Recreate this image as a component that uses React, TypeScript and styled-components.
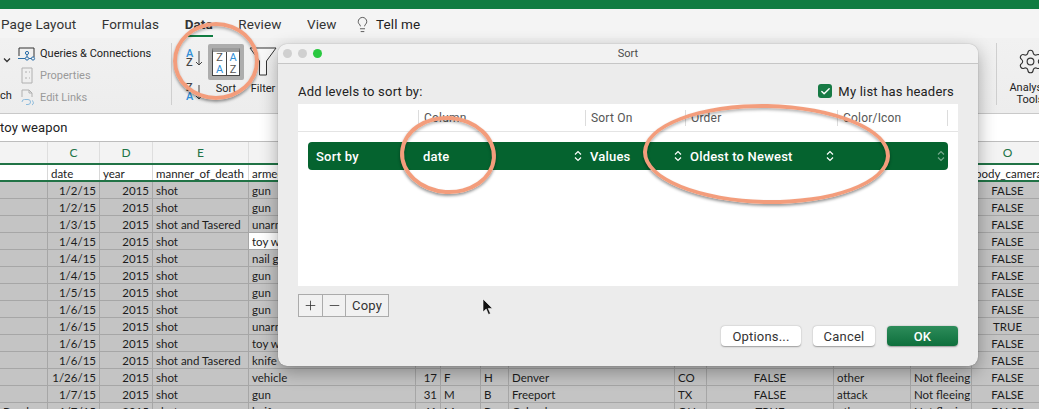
import styled, { createGlobalStyle } from "styled-components";
import { Lightbulb, Settings, Check, Plus, Minus } from "lucide-react";

const GlobalStyle = createGlobalStyle`
    html, body {
        margin: 0;
        padding: 0;
        background: #fff;
    }
    * {
        box-sizing: border-box;
    }
`;

const UI_FONT = `Roboto, "Liberation Sans", sans-serif`;
const SHEET_FONT = `Lato, "Liberation Sans", sans-serif`;
const GRID_LINE = "#a6a6a6";
const COLUMNS = "48px 52px 53px 96px 167px 25px 40px 28px 166px 32px 127px 77px 61px 72px";

const Page = styled.div`
    position: relative;
    width: 1039px;
    height: 409px;
    overflow: hidden;
    font-family: ${UI_FONT};
    color: #222;
`;

// Excel chrome
const TitleBar = styled.div`
    height: 9px;
    background: #107c41;
`;

const TabBar = styled.div`
    height: 29px;
    display: flex;
    align-items: center;
    gap: 25.5px;
    padding: 1px 0 0 1px;
    background: #f4f4f4;
    font-size: 13.5px;
    letter-spacing: 0.1px;
    color: #333;
`;

const Tab = styled.span<{ $active?: boolean }>`
    position: relative;
    font-weight: ${(p) => (p.$active ? 700 : 400)};

    &::after {
        content: "";
        display: ${(p) => (p.$active ? "block" : "none")};
        position: absolute;
        left: 0;
        right: 0;
        bottom: -5px;
        height: 2px;
        background: #107c41;
    }
`;

const TellMe = styled.span`
    display: flex;
    align-items: center;
    gap: 5px;
    margin-left: -8px;
    color: #222;
`;

const Ribbon = styled.div`
    height: 76px;
    display: flex;
    background: linear-gradient(#f1f1f1, #ededed);
    border-bottom: 1px solid #c9c9c9;
    padding-top: 5px;
`;

const RefreshStub = styled.div`
    width: 18px;
    flex: none;
    overflow: hidden;
    font-size: 11px;
    display: flex;
    flex-direction: column;
    align-items: flex-end;
    justify-content: space-between;
    padding: 14px 0 11px;
    direction: rtl;
`;

const StubChevron = styled.svg`
    width: 8px;
    height: 6px;
    margin-right: 7px;
    margin-left: auto;
`;

const ConnectionGroup = styled.div`
    width: 154px;
    flex: none;
    display: flex;
    flex-direction: column;
    gap: 5px;
    padding-top: 2px;
    border-right: 1px solid #cfcfcf;
    height: 62px;
`;

const ConnectionRow = styled.div<{ $disabled?: boolean }>`
    flex: none;
    display: flex;
    align-items: center;
    gap: 4px;
    height: 17px;
    font-size: 11px;
    color: ${(p) => (p.$disabled ? "#9a9a9a" : "#222")};
    & > svg {
        width: 18px;
        flex: none;
    }
`;

const SortStack = styled.div`
    width: 22px;
    flex: none;
    margin-left: 14px;
    display: flex;
    flex-direction: column;
    justify-content: space-between;
    padding-top: 6px;
    height: 58px;
`;

const AzIcon = styled.div`
    display: grid;
    grid-template-columns: 9px 8px;
    width: 18px;
    line-height: 9px;
    font-size: 11px;
    font-weight: 500;
`;

const AzLetter = styled.span<{ $blue?: boolean }>`
    color: ${(p) => (p.$blue ? "#2f8fd8" : "#444")};
    grid-column: 1;
    height: 9px;
`;

const AzArrow = styled.svg`
    grid-column: 2;
    grid-row: 1 / span 2;
    width: 8px;
    height: 18px;
`;

const RibbonTool = styled.div<{ $gap?: number }>`
    flex: none;
    display: flex;
    flex-direction: column;
    align-items: center;
    margin-left: ${(p) => p.$gap ?? 0}px;
    font-size: 11px;
    color: #222;
    height: 62px;
`;

const SortButton = styled.div`
    width: 36px;
    height: 36px;
    margin-top: 1px;
    margin-bottom: 2px;
    background: #adadad;
    border-radius: 2px;
    padding: 4px;
`;

const SortGlyph = styled.div`
    height: 28px;
    background: #fff;
    border: 1px solid #444;
    border-top: 4px solid #9b9b9b;
    display: grid;
    grid-template-columns: 1fr 1fr;
`;

const SortPane = styled.div`
    display: flex;
    flex-direction: column;
    align-items: center;
    font-size: 11px;
    line-height: 11.5px;
    & + & {
        border-left: 1px solid #444;
    }
`;

const PaneLetter = styled.span<{ $blue?: boolean }>`
    color: ${(p) => (p.$blue ? "#2f8fd8" : "#555")};
`;

const FunnelIcon = styled.svg`
    width: 28px;
    height: 30px;
    margin-bottom: 5px;
    margin-top: 4px;
`;

const RibbonSpacer = styled.div`
    flex: 1;
`;

const AnalysisTool = styled.div`
    width: 43px;
    flex: none;
    height: 62px;
    border-left: 1px solid #cfcfcf;
    padding: 5px 0 0 12px;
    overflow: hidden;
    white-space: nowrap;
    font-size: 11px;
    line-height: 12px;
    text-align: center;
`;

const AnalysisInner = styled.div`
    width: 42px;
    display: flex;
    flex-direction: column;
    align-items: center;
    & > svg {
        margin-bottom: 7px;
    }
`;

const FormulaBar = styled.div`
    height: 28px;
    padding: 0 0 1px 0;
    display: flex;
    align-items: center;
    background: #fff;
    border-bottom: 1px solid #bdbdbd;
    font-size: 13px;
    letter-spacing: 0.1px;
`;

// Sheet
const SheetRow = styled.div<{ $kind?: "letters" | "head" }>`
    display: grid;
    grid-template-columns: ${COLUMNS};
    font-family: ${SHEET_FONT};
    font-size: 11.5px;
    height: ${(p) => (p.$kind === "letters" ? "21px" : p.$kind === "head" ? "19px" : "17px")};
    background: ${(p) => (p.$kind === "letters" ? "#f3f3f3" : p.$kind === "head" ? "#fff" : "#c4c4c4")};
    border-bottom: ${(p) => (p.$kind === "letters" ? "none" : p.$kind === "head" ? "2px solid #217346" : `1px solid ${GRID_LINE}`)};
    border-top: ${(p) => (p.$kind === "head" ? "2px solid #217346" : "none")};
    color: #1c1c1c;
    white-space: nowrap;
`;

const Letter = styled.div`
    display: flex;
    align-items: center;
    justify-content: center;
    color: #217346;
    font-size: 12px;
    border-right: 1px solid #dedede;
`;

const Cell = styled.div<{ $align?: string; $active?: boolean; $plain?: boolean }>`
    padding: 1px 3px 0;
    line-height: 15px;
    text-align: ${(p) => p.$align ?? "left"};
    border-right: 1px solid ${(p) => (p.$plain ? "#d8d8d8" : GRID_LINE)};
    background: ${(p) => (p.$active ? "#fff" : "transparent")};
    overflow: hidden;
`;

// Sort dialog
const Dialog = styled.div`
    position: absolute;
    left: 278px;
    top: 44px;
    width: 700px;
    height: 322px;
    background: #ececec;
    border-radius: 9px;
    box-shadow: 0 0 1px rgba(0, 0, 0, 0.45), 0 6px 18px rgba(0, 0, 0, 0.32);
    display: flex;
    flex-direction: column;
    overflow: hidden;
`;

const DialogTitle = styled.div`
    position: relative;
    flex: none;
    height: 20px;
    background: #f2f2f2;
    border-bottom: 1px solid #c6c6c6;
    display: flex;
    align-items: center;
    justify-content: center;
    font-size: 11px;
    color: #4a4a4a;
`;

const Lights = styled.div`
    position: absolute;
    left: 5px;
    top: 5px;
    display: flex;
    gap: 6px;
`;

const Light = styled.i<{ $color: string }>`
    width: 9px;
    height: 9px;
    border-radius: 50%;
    background: ${(p) => p.$color};
`;

const DialogBody = styled.div`
    flex: 1;
    display: flex;
    flex-direction: column;
    padding: 0 20px 20px 20px;
`;

const DialogHead = styled.div`
    height: 40px;
    padding-top: 14px;
    display: flex;
    align-items: center;
    justify-content: space-between;
    font-size: 13px;
    letter-spacing: 0.2px;
`;

const HeaderToggle = styled.div`
    display: flex;
    align-items: center;
    gap: 6px;
    margin-right: 4px;
`;

const CheckBox = styled.span`
    width: 14px;
    height: 14px;
    border-radius: 3px;
    background: #177a45;
    color: #fff;
    display: flex;
    align-items: center;
    justify-content: center;
`;

const LevelsTable = styled.div`
    height: 182px;
    background: #fff;
    display: flex;
    flex-direction: column;
`;

const LevelsHeader = styled.div`
    height: 28px;
    flex: none;
    display: grid;
    grid-template-columns: 120px 167px 100px 152px 110px 11px;
    padding-top: 6px;
    border-bottom: 1px solid #e4e4e4;
    font-size: 12px;
    color: #555;
    letter-spacing: 0.2px;
`;

const LevelsHeading = styled.div`
    height: 16px;
    line-height: 17px;
    padding-left: 5px;
    border-left: 1px solid #dcdcdc;
    &:first-child {
        border-left: none;
    }
`;

const LevelRow = styled.div`
    margin: 10px 10px 0;
    height: 28px;
    background: #05632f;
    border-radius: 4px;
    color: #fff;
    display: grid;
    grid-template-columns: 110px 167px 100px 152px 1fr;
    align-items: center;
    font-size: 13px;
    font-weight: 500;
    letter-spacing: 0.2px;
`;

const LevelCell = styled.div<{ $first?: boolean }>`
    display: flex;
    align-items: center;
    justify-content: space-between;
    padding: 0 3px 0 ${(p) => (p.$first ? "8px" : "5px")};
`;

const Stepper = styled.svg<{ $faint?: boolean }>`
    width: 8px;
    height: 12px;
    opacity: ${(p) => (p.$faint ? 0.45 : 1)};
    flex: none;
`;

const LevelTools = styled.div`
    flex: none;
    display: inline-flex;
    align-self: flex-start;
    margin-top: 8px;
    height: 23px;
    border: 1px solid #ababab;
    background: #f1f1f1;
    font-size: 13px;
    letter-spacing: 0.2px;
    color: #333;
`;

const ToolButton = styled.div<{ $text?: boolean }>`
    width: ${(p) => (p.$text ? "auto" : "23px")};
    display: flex;
    align-items: center;
    justify-content: center;
    padding: 0 ${(p) => (p.$text ? "6px" : "0")};
    & + & {
        border-left: 1px solid #ababab;
    }
`;

const DialogFooter = styled.div`
    flex: 1;
    display: flex;
    justify-content: flex-end;
    align-items: flex-start;
    gap: 12px;
    padding-top: 9px;
`;

const PushButton = styled.div<{ $primary?: boolean; $width: number }>`
    width: ${(p) => p.$width}px;
    height: 20px;
    border-radius: 4px;
    display: flex;
    align-items: center;
    justify-content: center;
    font-size: 13px;
    letter-spacing: 0.2px;
    font-weight: ${(p) => (p.$primary ? 500 : 400)};
    color: ${(p) => (p.$primary ? "#fff" : "#333")};
    background: ${(p) => (p.$primary ? "linear-gradient(#2d8c5a, #0e6f3c)" : "#fff")};
    box-shadow: 0 0.5px 1.5px rgba(0, 0, 0, 0.35);
`;

// Hand-drawn callouts over the screenshot
const Ring = styled.div<{ $left: number; $top: number; $w: number; $h: number; $tilt?: number }>`
    position: absolute;
    left: ${(p) => p.$left}px;
    top: ${(p) => p.$top}px;
    width: ${(p) => p.$w}px;
    height: ${(p) => p.$h}px;
    border: 4.5px solid #f39d7c;
    border-radius: 50%;
    transform: rotate(${(p) => p.$tilt ?? 0}deg);
    box-shadow: 0 2px 3px rgba(0, 0, 0, 0.4), inset 0 2px 3px rgba(0, 0, 0, 0.28);
`;

const Pointer = styled.svg`
    position: absolute;
    left: 482px;
    top: 298px;
    width: 12px;
    height: 18px;
`;

type Row = {
    name?: string;
    date: string;
    manner: string;
    armed: string;
    tail?: string[];
    camera: string;
    active?: boolean;
};

const TAIL_DENVER = ["17", "F", "H", "Denver", "CO", "FALSE", "other", "Not fleeing"];
const TAIL_FREEPORT = ["31", "M", "B", "Freeport", "TX", "FALSE", "attack", "Not fleeing"];
const TAIL_COLUMBUS = ["41", "M", "B", "Columbus", "OH", "TRUE", "other", "Not fleeing"];

const ROWS: Row[] = [
    { date: "1/2/15", manner: "shot", armed: "gun", camera: "FALSE" },
    { date: "1/2/15", manner: "shot", armed: "gun", camera: "FALSE" },
    { date: "1/3/15", manner: "shot and Tasered", armed: "unarmed", camera: "FALSE" },
    { date: "1/4/15", manner: "shot", armed: "toy weapon", camera: "FALSE", active: true },
    { date: "1/4/15", manner: "shot", armed: "nail gun", camera: "FALSE" },
    { date: "1/4/15", manner: "shot", armed: "gun", camera: "FALSE" },
    { date: "1/5/15", manner: "shot", armed: "gun", camera: "FALSE" },
    { date: "1/6/15", manner: "shot", armed: "gun", camera: "FALSE" },
    { date: "1/6/15", manner: "shot", armed: "unarmed", camera: "TRUE" },
    { date: "1/6/15", manner: "shot", armed: "toy weapon", camera: "FALSE" },
    { date: "1/6/15", manner: "shot and Tasered", armed: "knife", camera: "FALSE" },
    { date: "1/26/15", manner: "shot", armed: "vehicle", tail: TAIL_DENVER, camera: "FALSE" },
    { date: "1/7/15", manner: "shot", armed: "gun", tail: TAIL_FREEPORT, camera: "FALSE" },
    { name: "Boyd", date: "1/7/15", manner: "shot", armed: "knife", tail: TAIL_COLUMBUS, camera: "FALSE" },
];

const LETTERS = ["", "C", "D", "E", "F", "G", "H", "I", "J", "K", "L", "M", "N", "O"];
const HEADINGS = ["", "date", "year", "manner_of_death", "armed", "age", "gender", "race", "city", "state", "signs_of_mental_illness", "threat_level", "flee", "body_camera"];

function StepperIcon({ faint }: { faint?: boolean }) {
    return (
        <Stepper viewBox="0 0 8 12" fill="none" stroke="#fff" strokeWidth="1.2" $faint={faint}>
            <path d="M1 4.5 4 1.5 7 4.5M1 7.5 4 10.5 7 7.5" />
        </Stepper>
    );
}

function SheetBody() {
    return (
        <>
            <SheetRow $kind="letters">
                {LETTERS.map((letter, i) => (
                    <Letter key={i}>{letter}</Letter>
                ))}
            </SheetRow>
            <SheetRow $kind="head">
                {HEADINGS.map((heading, i) => (
                    <Cell key={i} $plain>
                        {heading}
                    </Cell>
                ))}
            </SheetRow>
            {ROWS.map((row, i) => (
                <SheetRow key={i}>
                    <Cell>{row.name}</Cell>
                    <Cell $align="right">{row.date}</Cell>
                    <Cell $align="right">2015</Cell>
                    <Cell>{row.manner}</Cell>
                    <Cell $active={row.active}>{row.armed}</Cell>
                    {(row.tail ?? ["", "", "", "", "", "", "", ""]).map((value, j) => (
                        <Cell key={j} $align={j === 0 ? "right" : j === 5 ? "center" : "left"}>
                            {value}
                        </Cell>
                    ))}
                    <Cell $align="center">{row.camera}</Cell>
                </SheetRow>
            ))}
        </>
    );
}

function SortDialog() {
    return (
        <Dialog>
            <DialogTitle>
                <Lights>
                    <Light $color="#d0d0d0" />
                    <Light $color="#d0d0d0" />
                    <Light $color="#2ac840" />
                </Lights>
                Sort
            </DialogTitle>
            <DialogBody>
                <DialogHead>
                    <span>Add levels to sort by:</span>
                    <HeaderToggle>
                        <CheckBox>
                            <Check size={11} strokeWidth={3} />
                        </CheckBox>
                        My list has headers
                    </HeaderToggle>
                </DialogHead>
                <LevelsTable>
                    <LevelsHeader>
                        <LevelsHeading />
                        <LevelsHeading>Column</LevelsHeading>
                        <LevelsHeading>Sort On</LevelsHeading>
                        <LevelsHeading>Order</LevelsHeading>
                        <LevelsHeading>Color/Icon</LevelsHeading>
                        <LevelsHeading />
                    </LevelsHeader>
                    <LevelRow>
                        <LevelCell $first>Sort by</LevelCell>
                        <LevelCell>
                            date
                            <StepperIcon />
                        </LevelCell>
                        <LevelCell>
                            Values
                            <StepperIcon />
                        </LevelCell>
                        <LevelCell>
                            Oldest to Newest
                            <StepperIcon />
                        </LevelCell>
                        <LevelCell>
                            <span />
                            <StepperIcon faint />
                        </LevelCell>
                    </LevelRow>
                </LevelsTable>
                <LevelTools>
                    <ToolButton>
                        <Plus size={15} strokeWidth={1.3} />
                    </ToolButton>
                    <ToolButton>
                        <Minus size={15} strokeWidth={1.3} />
                    </ToolButton>
                    <ToolButton $text>Copy</ToolButton>
                </LevelTools>
                <DialogFooter>
                    <PushButton $width={80}>Options...</PushButton>
                    <PushButton $width={62}>Cancel</PushButton>
                    <PushButton $width={71} $primary>
                        OK
                    </PushButton>
                </DialogFooter>
            </DialogBody>
        </Dialog>
    );
}

function AzGlyph({ reverse }: { reverse?: boolean }) {
    return (
        <AzIcon>
            <AzLetter $blue={!reverse}>{reverse ? "Z" : "A"}</AzLetter>
            <AzArrow viewBox="0 0 8 18" fill="none" stroke="#444" strokeWidth="1">
                <path d="M4 2v14M1 13l3 3 3-3" />
            </AzArrow>
            <AzLetter $blue={reverse}>{reverse ? "A" : "Z"}</AzLetter>
        </AzIcon>
    );
}

function RibbonContent() {
    return (
        <Ribbon>
            <RefreshStub>
                <StubChevron viewBox="0 0 8 6" fill="none" stroke="#333" strokeWidth="1.3">
                    <path d="M1 1.5 4 4.5 7 1.5" />
                </StubChevron>
                <span>ch</span>
            </RefreshStub>
            <ConnectionGroup>
                <ConnectionRow>
                    <svg viewBox="0 0 18 14" height="14" fill="none" stroke="#2b6ea8" strokeWidth="1">
                        <path d="M1 1h15v9" stroke="#333" />
                        <path d="M1 1v8" stroke="#333" />
                        <circle cx="9" cy="6" r="1.6" />
                        <circle cx="9" cy="11.5" r="1.6" />
                        <circle cx="15" cy="11.5" r="1.6" />
                        <path d="M0 11.5h7M11 11.5h2.5M9 7.6v2.3" />
                    </svg>
                    Queries &amp; Connections
                </ConnectionRow>
                <ConnectionRow $disabled>
                    <svg viewBox="0 0 18 17" height="17" fill="none" stroke="#b0b0b0" strokeWidth="1">
                        <path d="M4 1h10v15H4z" />
                        <path d="M7 5h2M7 11h2M11 5h1M11 11h1" />
                    </svg>
                    Properties
                </ConnectionRow>
                <ConnectionRow $disabled>
                    <svg viewBox="0 0 18 17" height="17" fill="none" stroke="#b0b0b0" strokeWidth="1">
                        <path d="M4 8V1h7l3 3v4M11 1v3h3" />
                        <path d="M4 13a2.5 2.5 0 0 1 2.5-2.5H10a2.5 2.5 0 0 1 0 5H8M14 11.5a2.5 2.5 0 0 1 0 4.5" stroke="#8cbbdd" />
                    </svg>
                    Edit Links
                </ConnectionRow>
            </ConnectionGroup>
            <SortStack>
                <AzGlyph />
                <AzGlyph reverse />
            </SortStack>
            <RibbonTool>
                <SortButton>
                    <SortGlyph>
                        <SortPane>
                            <PaneLetter>Z</PaneLetter>
                            <PaneLetter $blue>A</PaneLetter>
                        </SortPane>
                        <SortPane>
                            <PaneLetter $blue>A</PaneLetter>
                            <PaneLetter>Z</PaneLetter>
                        </SortPane>
                    </SortGlyph>
                </SortButton>
                Sort
            </RibbonTool>
            <RibbonTool $gap={5}>
                <FunnelIcon viewBox="0 0 28 30" fill="#f8f8f8" stroke="#333" strokeWidth="1">
                    <path d="M1 1h26L17.500 14v14h-7V14z" />
                </FunnelIcon>
                Filter
            </RibbonTool>
            <RibbonSpacer />
            <AnalysisTool>
                <AnalysisInner>
                    <Settings size={27} strokeWidth={1} color="#333" />
                    <span>Analysis</span>
                    <span>Tools</span>
                </AnalysisInner>
            </AnalysisTool>
        </Ribbon>
    );
}

export default function App() {
    return (
        <Page>
            <GlobalStyle />
            <TitleBar />
            <TabBar>
                <Tab>Page Layout</Tab>
                <Tab>Formulas</Tab>
                <Tab $active>Data</Tab>
                <Tab>Review</Tab>
                <Tab>View</Tab>
                <TellMe>
                    <Lightbulb size={17} strokeWidth={1} />
                    Tell me
                </TellMe>
            </TabBar>
            <RibbonContent />
            <FormulaBar>toy weapon</FormulaBar>
            <SheetBody />
            <SortDialog />
            <Ring $left={173} $top={22} $w={86} $h={78} />
            <Ring $left={400} $top={116} $w={96} $h={78} $tilt={4} />
            <Ring $left={643} $top={104} $w={247} $h={100} $tilt={1} />
            <Pointer viewBox="0 0 12 18">
                <path d="M1 1v13l3.2-3 2.3 5.500 2-.9-2.300-5.200H10.500z" fill="#111" stroke="#fff" strokeWidth="0.6" />
            </Pointer>
        </Page>
    );
}
